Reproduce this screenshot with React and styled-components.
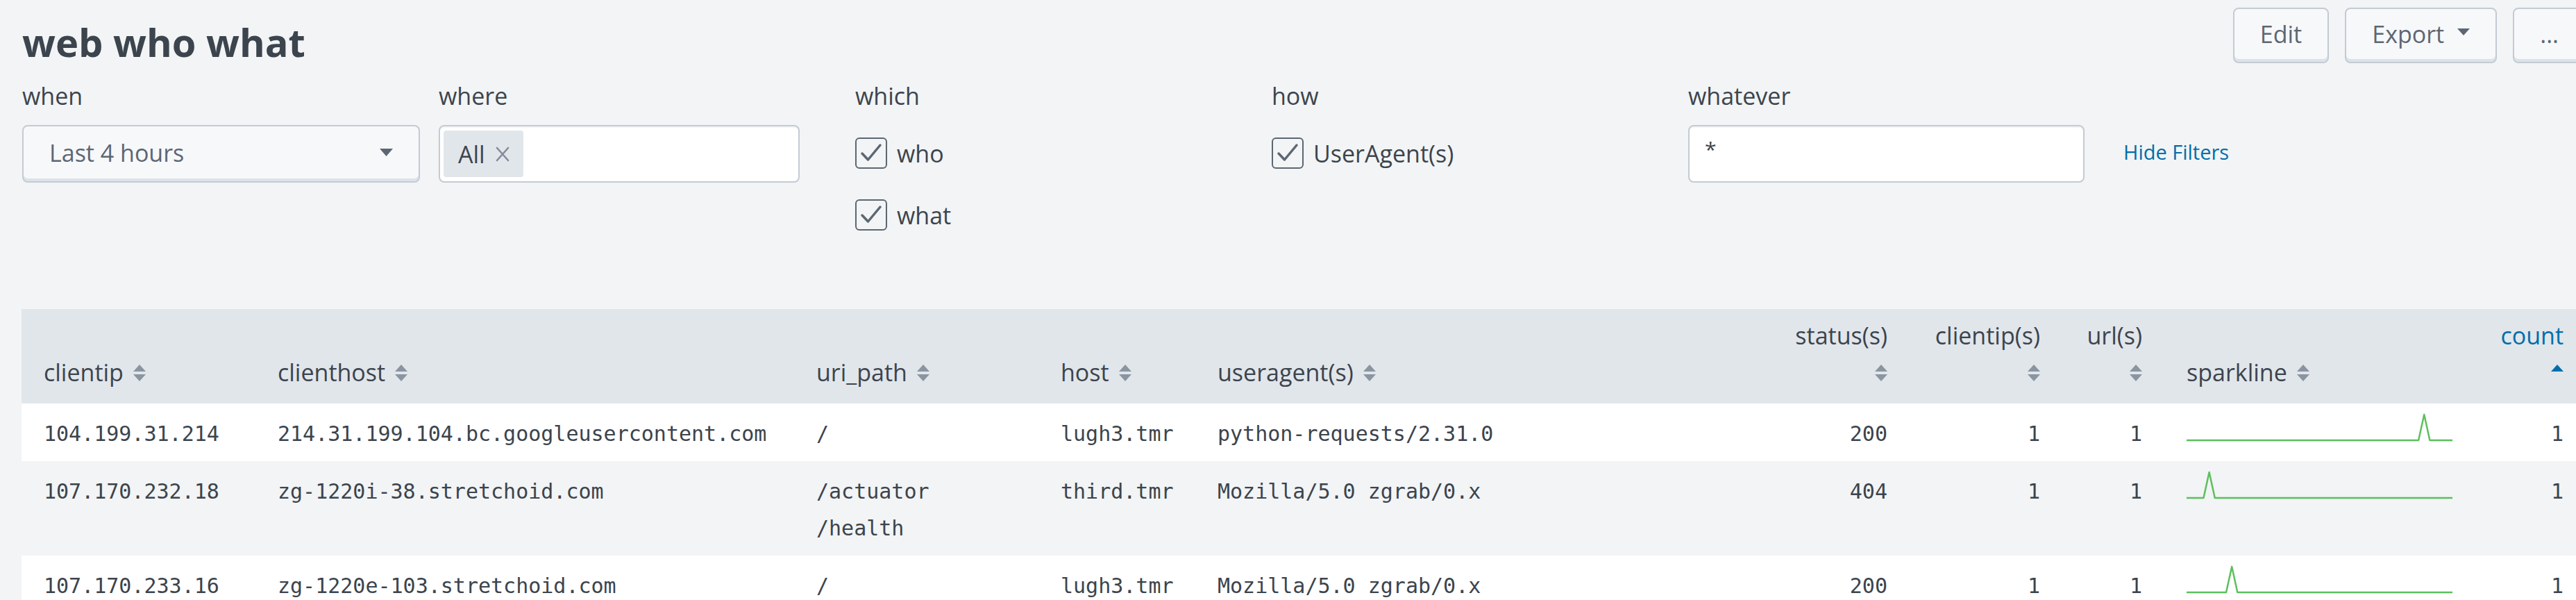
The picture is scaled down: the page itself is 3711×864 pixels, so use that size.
import React from 'react';
import styled, { createGlobalStyle } from 'styled-components';

const GlobalStyle = createGlobalStyle`
  html, body { margin: 0; padding: 0; overflow: hidden; background: #f2f4f5; }
  body { font-family: "Open Sans", "Liberation Sans", sans-serif; color: #3c444d; }
  * { box-sizing: border-box; }
`;

const Page = styled.div`
  width: 3757px;
  padding: 0 32px;
`;

const HeaderBar = styled.div`
  display: flex;
  justify-content: space-between;
  align-items: flex-start;
`;

const Title = styled.h1`
  margin: 0;
  padding-top: 22px;
  font-size: 56px;
  line-height: 76px;
  font-weight: 700;
  color: #3c444d;
`;

const Actions = styled.div`
  display: flex;
  gap: 23px;
  margin-top: 11px;
`;

const Button = styled.button`
  display: flex;
  align-items: center;
  gap: 19px;
  height: 80px;
  padding: 0 ${p => p.$px || 37}px 4px;
  background: #f7f8fa;
  border: 2px solid #c3cbd4;
  border-radius: 8px;
  box-shadow: inset 0 -4px 0 #dde2e7;
  font-family: "Open Sans", "Liberation Sans", sans-serif;
  font-size: 34px;
  line-height: 46px;
  color: #5c6773;
`;

const Caret = styled.svg`
  display: block;
  margin-top: ${p => p.$lift || 0}px;
`;

const InputsRow = styled.div`
  display: flex;
  align-items: flex-start;
  padding-top: 17px;
`;

const Field = styled.div`
  width: ${p => p.$w}px;
  flex: none;
`;

const Label = styled.div`
  font-size: 34px;
  line-height: 46px;
  color: #3c444d;
  margin-bottom: ${p => p.$mb || 0}px;
`;

const Select = styled.div`
  display: flex;
  justify-content: space-between;
  align-items: center;
  width: 573px;
  height: 83px;
  padding: 0 37px 4px;
  background: #f7f8fa;
  border: 2px solid #c3cbd4;
  border-radius: 8px;
  box-shadow: inset 0 -4px 0 #dde2e7;
  font-size: 34px;
  line-height: 46px;
  color: #5c6773;
`;

const TextBox = styled.div`
  display: flex;
  align-items: ${p => (p.$top ? 'flex-start' : 'center')};
  width: ${p => p.$w}px;
  height: 83px;
  padding: ${p => p.$pad};
  background: #fff;
  border: 2px solid #c3cbd4;
  border-radius: 8px;
  box-shadow: inset 0 3px 2px -1px rgba(60, 68, 77, 0.07);
  font-size: ${p => p.$fs || 34}px;
  line-height: 46px;
  color: #3c444d;
`;

const Tag = styled.span`
  display: flex;
  align-items: center;
  gap: 15px;
  height: 67px;
  padding: 0 20px 0 21px;
  background: #e1e6eb;
  border-radius: 4px;
  color: #3c444d;
`;

const CheckList = styled.div`
  display: flex;
  flex-direction: column;
  gap: 44px;
  margin-top: 37px;
`;

const CheckItem = styled.label`
  display: flex;
  align-items: center;
  gap: 14px;
  height: 45px;
  font-size: 34px;
  line-height: 46px;
  color: #3c444d;
`;

const Box = styled.span`
  display: flex;
  align-items: center;
  justify-content: center;
  width: 46px;
  height: 45px;
  border: 2px solid #5c6773;
  border-radius: 6px;
  flex: none;
`;

const HideLink = styled.a`
  margin-left: 56px;
  margin-top: 84px;
  font-size: 29px;
  line-height: 39px;
  color: #006eaa;
  text-decoration: none;
  white-space: nowrap;
`;

const COLS = '337px 776px 352px 226px 825px 172px 220px 147px 458px 149px';

const Table = styled.div`
  margin: 113px 0 0 -1px;
  width: 3694px;
`;

const HeadRow = styled.div`
  display: grid;
  grid-template-columns: ${COLS};
  padding: 0 16px;
  background: #e1e6eb;
`;

const HeadCell = styled.div`
  align-self: end;
  padding: 12px 16px 18px ${p => p.$pl || 16}px;
  font-size: 34px;
  line-height: 53px;
  text-align: ${p => (p.$num ? 'right' : 'left')};
  color: ${p => (p.$sorted ? '#006eaa' : '#3c444d')};
  white-space: nowrap;
`;

const Row = styled.div`
  display: grid;
  grid-template-columns: ${COLS};
  padding: 0 16px;
  background: ${p => (p.$odd ? '#ffffff' : '#f2f4f5')};
`;

const Cell = styled.div`
  padding: 17px 16px 13px ${p => p.$pl || 16}px;
  font-family: "DejaVu Sans Mono", "Liberation Mono", monospace;
  font-size: 30px;
  line-height: 53px;
  text-align: ${p => (p.$num ? 'right' : 'left')};
  color: #3c444d;
  white-space: nowrap;
`;

const Line = styled.div``;

const SortSvg = styled.svg`
  display: inline-block;
  vertical-align: baseline;
  margin-left: ${p => (p.$stack ? 0 : 14)}px;
`;

const SparkSvg = styled.svg`
  display: block;
  margin-top: -3px;
  overflow: visible;
`;

function SortIcon({ active, stack }) {
  return (
    <SortSvg width="18" height="24" viewBox="0 0 18 24" $stack={stack}>
      <path d="M9 0 L18 10 L0 10 Z" fill={active ? '#006eaa' : '#8a95a1'} />
      {!active && <path d="M0 14 L18 14 L9 24 Z" fill="#8a95a1" />}
    </SortSvg>
  );
}

function Sparkline({ peak }) {
  const n = 48;
  const w = 383;
  const step = w / (n - 1);
  const pts = Array.from({ length: n }, (_, i) => `${(i * step).toFixed(2)},${i === peak ? 2 : 39}`).join(' ');
  return (
    <SparkSvg width={w} height="40" viewBox={`0 0 ${w} 40`}>
      <polyline points={pts} fill="none" stroke="#5cc05c" strokeWidth="2.5" strokeLinejoin="round" />
    </SparkSvg>
  );
}

function CheckBox() {
  return (
    <Box>
      <svg width="34" height="30" viewBox="0 0 34 30">
        <path d="M4 15 L12.5 24 L30 3" fill="none" stroke="#5c6773" strokeWidth="3.5" strokeLinecap="round" strokeLinejoin="round" />
      </svg>
    </Box>
  );
}

const columns = [
  { key: 'clientip', label: 'clientip' },
  { key: 'clienthost', label: 'clienthost' },
  { key: 'uri', label: 'uri_path' },
  { key: 'host', label: 'host' },
  { key: 'ua', label: 'useragent(s)' },
  { key: 'status', label: 'status(s)', num: true, stack: true },
  { key: 'cips', label: 'clientip(s)', num: true, stack: true },
  { key: 'urls', label: 'url(s)', num: true, stack: true },
  { key: 'spark', label: 'sparkline', pl: 48 },
  { key: 'count', label: 'count', num: true, stack: true, sorted: true },
];

const rows = [
  { clientip: '104.199.31.214', clienthost: '214.31.199.104.bc.googleusercontent.com', uri: ['/'], host: 'lugh3.tmr', ua: 'python-requests/2.31.0', status: '200', cips: '1', urls: '1', spark: 42, count: '1' },
  { clientip: '107.170.232.18', clienthost: 'zg-1220i-38.stretchoid.com', uri: ['/actuator', '/health'], host: 'third.tmr', ua: 'Mozilla/5.0 zgrab/0.x', status: '404', cips: '1', urls: '1', spark: 4, count: '1' },
  { clientip: '107.170.233.16', clienthost: 'zg-1220e-103.stretchoid.com', uri: ['/'], host: 'lugh3.tmr', ua: 'Mozilla/5.0 zgrab/0.x', status: '200', cips: '1', urls: '1', spark: 8, count: '1' },
];

export default function App() {
  return (
    <>
      <GlobalStyle />
      <Page>
        <HeaderBar>
          <Title>web who what</Title>
          <Actions>
            <Button>Edit</Button>
            <Button>
              Export
              <Caret $lift={-6} width="18" height="10" viewBox="0 0 18 10">
                <path d="M0 0 H18 L9 10 Z" fill="#5c6773" />
              </Caret>
            </Button>
            <Button>...</Button>
          </Actions>
        </HeaderBar>

        <InputsRow>
          <Field $w={600}>
            <Label $mb={19}>when</Label>
            <Select>
              <span>Last 4 hours</span>
              <Caret width="19" height="11" viewBox="0 0 19 11">
                <path d="M0 0 H19 L9.5 11 Z" fill="#5c6773" />
              </Caret>
            </Select>
          </Field>
          <Field $w={600}>
            <Label $mb={19}>where</Label>
            <TextBox $w={520} $pad="0 5px 0 5px">
              <Tag>
                All
                <svg width="20" height="22" viewBox="0 0 20 22">
                  <path d="M2 2 L18 20 M18 2 L2 20" stroke="#818d99" strokeWidth="2.6" strokeLinecap="round" />
                </svg>
              </Tag>
            </TextBox>
          </Field>
          <Field $w={600}>
            <Label>which</Label>
            <CheckList>
              <CheckItem><CheckBox />who</CheckItem>
              <CheckItem><CheckBox />what</CheckItem>
            </CheckList>
          </Field>
          <Field $w={600}>
            <Label>how</Label>
            <CheckList>
              <CheckItem><CheckBox />UserAgent(s)</CheckItem>
            </CheckList>
          </Field>
          <Field $w={571}>
            <Label $mb={19}>whatever</Label>
            <TextBox $w={571} $top $fs={30} $pad="10px 22px 0">*</TextBox>
          </Field>
          <HideLink href="#">Hide Filters</HideLink>
        </InputsRow>

        <Table>
          <HeadRow>
            {columns.map(c => (
              <HeadCell key={c.key} $num={c.num} $sorted={c.sorted} $pl={c.pl}>
                {c.label}
                {c.stack && <br />}
                <SortIcon active={c.sorted} stack={c.stack} />
              </HeadCell>
            ))}
          </HeadRow>
          {rows.map((r, i) => (
            <Row key={r.clientip} $odd={i % 2 === 0}>
              {columns.map(c => (
                <Cell key={c.key} $num={c.num} $pl={c.pl}>
                  {c.key === 'spark' ? (
                    <Sparkline peak={r.spark} />
                  ) : c.key === 'uri' ? (
                    r.uri.map(u => <Line key={u}>{u}</Line>)
                  ) : (
                    r[c.key]
                  )}
                </Cell>
              ))}
            </Row>
          ))}
        </Table>
      </Page>
    </>
  );
}
